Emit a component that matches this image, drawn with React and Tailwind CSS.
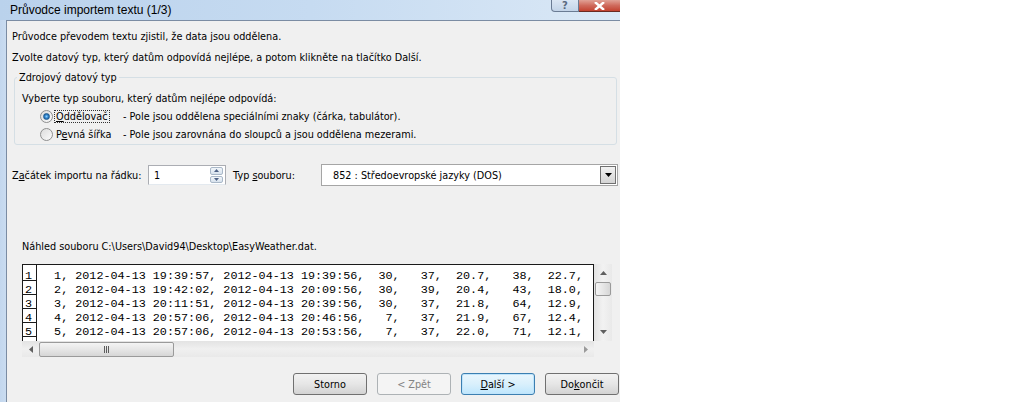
import React from 'react';

const lines = [
  ['1', '  1, 2012-04-13 19:39:57, 2012-04-13 19:39:56,  30,   37,  20.7,   38,  22.7,'],
  ['2', '  2, 2012-04-13 19:42:02, 2012-04-13 20:09:56,  30,   39,  20.4,   43,  18.0,'],
  ['3', '  3, 2012-04-13 20:11:51, 2012-04-13 20:39:56,  30,   37,  21.8,   64,  12.9,'],
  ['4', '  4, 2012-04-13 20:57:06, 2012-04-13 20:46:56,   7,   37,  21.9,   67,  12.4,'],
  ['5', '  5, 2012-04-13 20:57:06, 2012-04-13 20:53:56,   7,   37,  22.0,   71,  12.1,'],
];

// Win7 style push button
const Button = ({ children, disabled, isDefault }) => {
  let cls = 'border-[#707070] text-black bg-linear-to-b from-[#f2f2f2] via-[#e6e6e6] to-[#d3d3d3]';
  if (disabled) cls = 'border-[#adb2b5] text-[#838383] bg-[#f4f4f4]';
  if (isDefault) cls = 'border-[#3c7fb1] text-black bg-linear-to-b from-[#eaf6fd] via-[#d9f0fc] to-[#bee6fd] shadow-[inset_0_0_0_1px_#bfe4fb]';
  return (
    <div className={`w-[74px] h-[22px] rounded-[3px] border flex items-center justify-center leading-[13px] ${cls}`}>
      {children}
    </div>
  );
};

const Radio = ({ checked }) => (
  <div className="w-[13px] h-[13px] rounded-full border border-[#8e8f8f] bg-linear-to-br from-[#dcdcdc] to-[#fbfbfb] flex items-center justify-center">
    {checked && (
      <div className="w-[7px] h-[7px] rounded-full bg-radial from-[#8ad3ff] via-[#2a7fc9] to-[#1b4f8a] border border-[#1e5b8f]" />
    )}
  </div>
);

const Tri = ({ dir, color = '#606060' }) => {
  const pts = {
    up: '0,4 3.5,0 7,4',
    down: '0,0 7,0 3.5,4',
    left: '4,0 4,7 0,3.5',
    right: '0,0 0,7 4,3.5',
  }[dir];
  const vert = dir === 'up' || dir === 'down';
  return (
    <svg width={vert ? 7 : 4} height={vert ? 4 : 7}>
      <polygon points={pts} fill={color} />
    </svg>
  );
};

const Grip = () => (
  <div className="flex gap-[1px]">
    {[0, 1, 2].map((i) => (
      <div key={i} className="w-[1px] h-[7px] bg-[#5d5d5d]" />
    ))}
  </div>
);

export default function App() {
  return (
    <div className="w-[1010px] h-[402px] bg-white flex text-[9.7px] text-black font-['DejaVu_Sans',Verdana,sans-serif]">
      <div className="w-[620px] h-full flex flex-col">
        {/* title bar */}
        <div className="h-[20px] flex bg-linear-to-r from-[#bad2ec] via-[#c6dbf1] to-[#dae8f6]">
          <span className="pl-[10px] pt-[3px] text-[12px] leading-[15px] font-['Liberation_Sans',Arial,sans-serif]">Průvodce importem textu (1/3)</span>
          <div className="ml-auto flex h-[12px]">
            <div className="w-[28px] h-full border border-t-0 border-[#6a7b93] rounded-bl-[4px] bg-linear-to-b from-[#dbe6f3] to-[#c3d4e8] flex items-center justify-center text-[10px] leading-[10px] text-[#5a6a80] font-bold">?</div>
            <div className="w-[41px] h-full border-b border-[#6a2a22] bg-linear-to-b from-[#e0a196] via-[#cf6a5c] to-[#c2412f] flex items-center justify-center">
              <svg width="11" height="8"><path d="M1 0 L10 8 M10 0 L1 8" stroke="#fff" strokeWidth="2.4" /></svg>
            </div>
          </div>
        </div>

        <div className="flex-1 flex">
          <div className="w-[7px] bg-linear-to-r from-[#c3d7ee] to-[#cadcf0] border-r border-[#7b8ca3]" />
          <div className="flex-1 flex flex-col bg-[#f0f0f0] border-t border-[#7b8ca3] pl-[5px] leading-[13px]">
            <p className="mt-[9px]">Průvodce převodem textu zjistil, že data jsou oddělena.</p>
            <p className="mt-[8px]">Zvolte datový typ, který datům odpovídá nejlépe, a potom klikněte na tlačítko Další.</p>

            <fieldset className="mt-[7px] ml-[2px] mr-[3px] border border-[#d5dfe5] rounded-[3px] pb-[1px]">
              <legend className="ml-[2px] px-[2px] leading-[13px]">Zdrojový datový typ</legend>
              <p className="pl-[7px] mt-[8px]">Vyberte typ souboru, který datům nejlépe odpovídá:</p>
              <div className="pl-[25px] mt-[2px] h-[18px] flex items-center">
                <Radio checked />
                <span className="ml-[2px] w-[68px]">
                  <span className="px-[1px] outline outline-1 outline-dotted outline-[#333]"><u>O</u>ddělovač</span>
                </span>
                <span>- Pole jsou oddělena speciálními znaky (čárka, tabulátor).</span>
              </div>
              <div className="pl-[25px] h-[18px] flex items-center">
                <Radio />
                <span className="ml-[3px] w-[67px]">P<u>e</u>vná šířka</span>
                <span>- Pole jsou zarovnána do sloupců a jsou oddělena mezerami.</span>
              </div>
            </fieldset>

            <div className="mt-[19px] h-[22px] flex items-center">
              <span className="w-[136px]">Z<u>a</u>čátek importu na řádku:</span>
              <div className="w-[78px] h-[20px] border border-[#abadb3] border-b-[#e3e9ef] bg-white flex items-center">
                <span className="pl-[5px] flex-1">1</span>
                <div className="w-[16px] h-full flex flex-col gap-[1px] p-[1px] pr-[2px]">
                  <div className="flex-1 border border-[#a9b8c8] rounded-[2px] bg-linear-to-b from-[#f2f6fa] to-[#d7e2ed] flex items-center justify-center">
                    <svg width="5" height="3"><polygon points="0,3 2.5,0 5,3" fill="#4d6185" /></svg>
                  </div>
                  <div className="flex-1 border border-[#a9b8c8] rounded-[2px] bg-linear-to-b from-[#f2f6fa] to-[#d7e2ed] flex items-center justify-center">
                    <svg width="5" height="3"><polygon points="0,0 5,0 2.5,3" fill="#4d6185" /></svg>
                  </div>
                </div>
              </div>
              <span className="ml-[7px] w-[88px]">Typ <u>s</u>ouboru:</span>
              <div className="w-[297px] h-[22px] border border-[#a5a5a5] bg-white flex items-center">
                <span className="pl-[11px] flex-1">852 : Středoevropské jazyky (DOS)</span>
                <div className="w-[16px] h-[18px] mr-[1px] border border-[#707070] bg-linear-to-b from-[#f2f2f2] to-[#d4d4d4] flex items-center justify-center">
                  <svg width="7" height="4"><polygon points="0,0 7,0 3.5,4" fill="#000" /></svg>
                </div>
              </div>
            </div>

            <p className="pl-[10px] mt-[54px]">Náhled souboru C:\Users\David94\Desktop\EasyWeather.dat.</p>

            <div className="ml-[10px] mt-[11px] w-[590px] flex">
              <div className="w-[572px] flex flex-col">
                <div className="h-[77px] border border-b-0 border-[#1a1a1a] bg-white flex overflow-hidden font-['Liberation_Mono','Courier_New',monospace] text-[11.75px] text-black">
                  <div className="w-[14px] pt-[2px] border-r border-[#1a1a1a] flex flex-col">
                    {lines.map(([n]) => (
                      <div key={n} className="h-[14px] shrink-0 border-b border-[#1a1a1a] flex items-end pl-[2px] leading-[8px]">
                        {n}
                      </div>
                    ))}
                  </div>
                  <div className="flex-1 pt-[2px] pl-[3px] flex flex-col">
                    {lines.map(([n, t]) => (
                      <div key={n} className="h-[14px] shrink-0 pb-[1px] flex items-end leading-[8px] whitespace-pre">
                        {t}
                      </div>
                    ))}
                  </div>
                </div>
                <div className="h-[16px] bg-linear-to-b from-[#e3e3e3] via-[#f0f0f0] to-[#e9e9e9] flex items-center">
                  <div className="w-[17px] flex justify-center"><Tri dir="left" /></div>
                  <div className="w-[135px] h-[15px] rounded-[2px] border border-[#9a9a9a] bg-linear-to-b from-[#f4f4f4] via-[#e6e6e6] to-[#d6d6d6] flex items-center justify-center">
                    <Grip />
                  </div>
                  <div className="flex-1" />
                  <div className="w-[17px] flex justify-center"><Tri dir="right" color="#9a9a9a" /></div>
                </div>
              </div>
              <div className="w-[18px] h-[77px] bg-linear-to-r from-[#e3e3e3] via-[#f2f2f2] to-[#e9e9e9] flex flex-col items-center">
                <div className="h-[18px] flex items-center"><Tri dir="up" /></div>
                <div className="w-[16px] h-[14px] rounded-[2px] border border-[#9a9a9a] bg-linear-to-r from-[#f4f4f4] via-[#e6e6e6] to-[#d6d6d6]" />
                <div className="flex-1" />
                <div className="h-[18px] flex items-center"><Tri dir="down" /></div>
              </div>
            </div>

            <div className="mt-[16px] flex justify-end gap-[10px] pr-[1px]">
              <Button>Storno</Button>
              <Button disabled>&lt; Zpět</Button>
              <Button isDefault><u>D</u>alší &gt;</Button>
              <Button>Do<u>k</u>ončit</Button>
            </div>
          </div>
        </div>
      </div>
    </div>
  );
}
